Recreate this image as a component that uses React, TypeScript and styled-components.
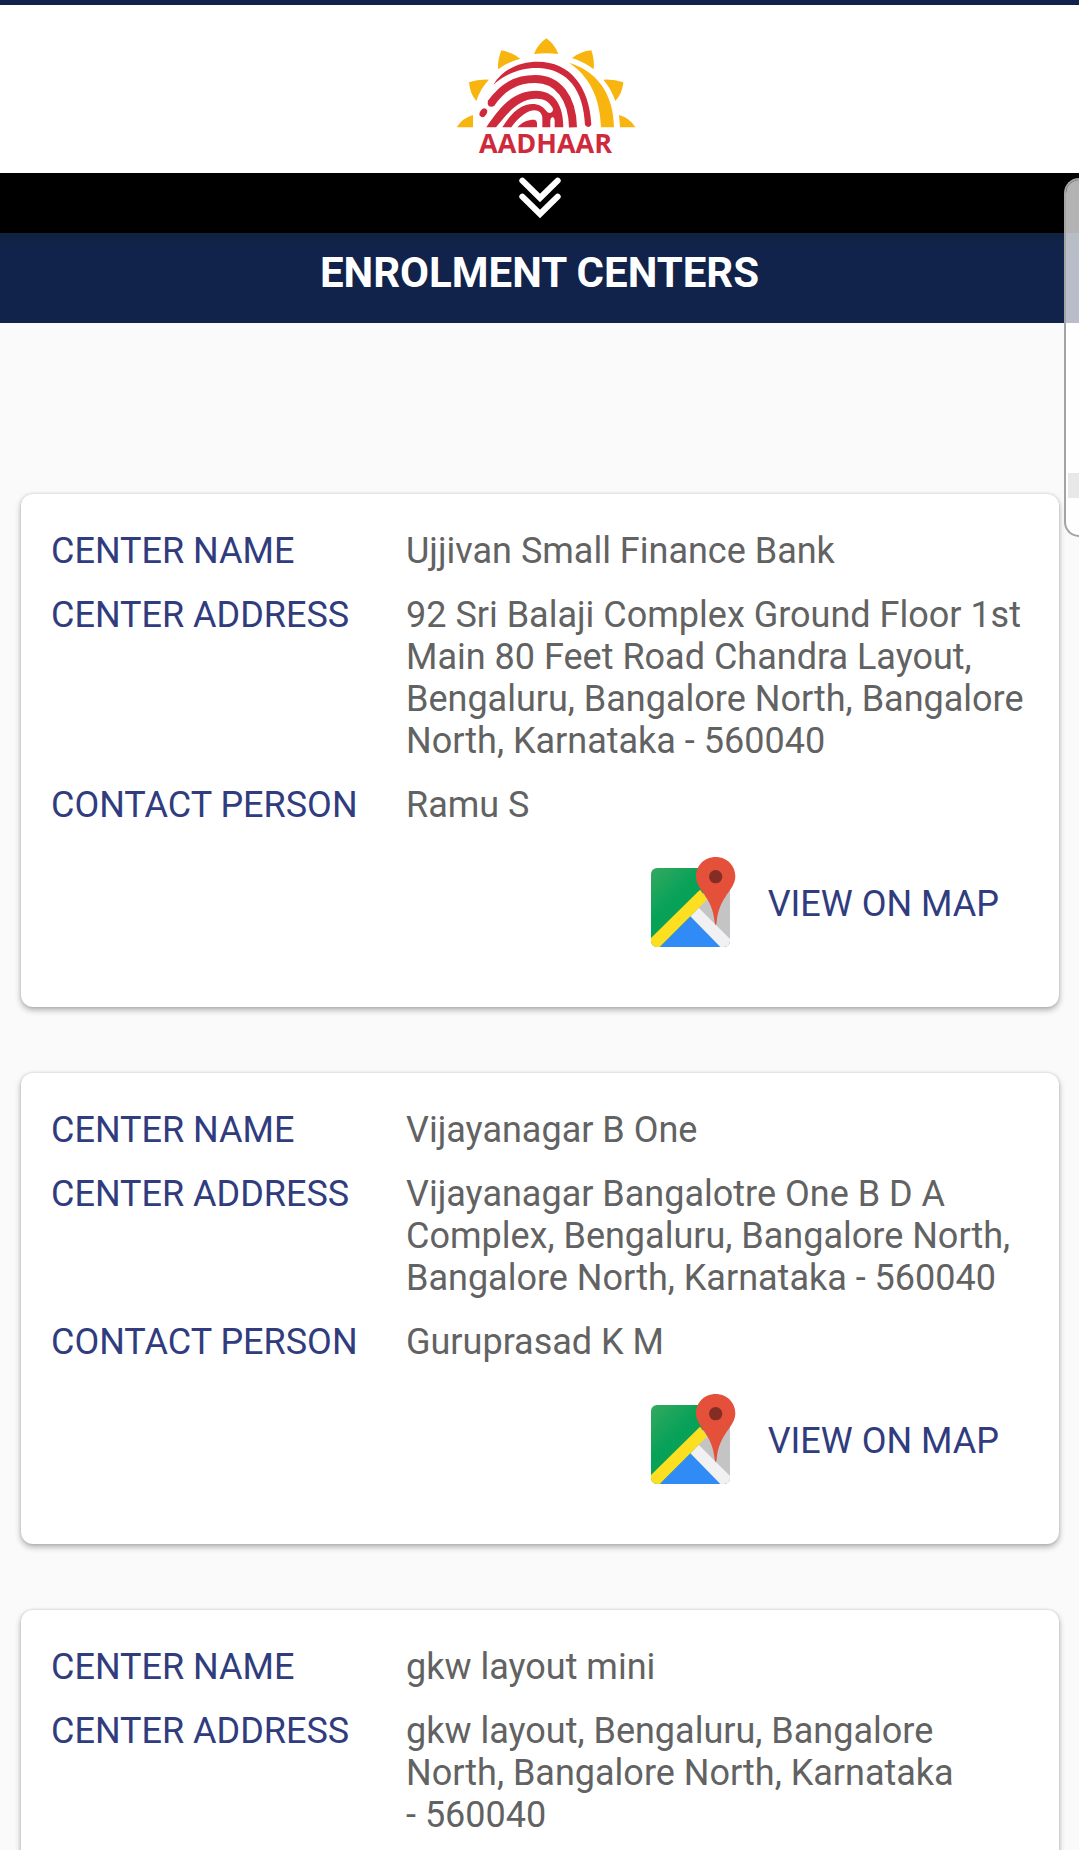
import React from "react";
import styled, { createGlobalStyle } from "styled-components";

const GlobalStyle = createGlobalStyle`
  *, *::before, *::after { box-sizing: border-box; }
  body {
    margin: 0;
    background: #fafafa;
    font-family: Roboto, "Noto Sans", sans-serif;
  }
`;

const Screen = styled.div`
  display: flex;
  flex-direction: column;
  height: 100vh;
  overflow: hidden;
  background: #fafafa;
`;

const Header = styled.header`
  flex: none;
  display: flex;
  flex-direction: column;
  align-items: center;
  height: 173px;
  padding: 32px 0 0 12px;
  border-top: 5px solid #11234a;
  background: #fff;
`;

const LogoName = styled.span`
  margin-top: -3px;
  color: #cf2a3c;
  font: 700 27px/36px "Open Sans", "Noto Sans", sans-serif;
`;

const Expander = styled.button`
  flex: none;
  display: flex;
  justify-content: center;
  align-items: flex-start;
  width: 100%;
  height: 60px;
  padding: 4px 0 0;
  border: 0;
  background: #000;
`;

const TitleBar = styled.div`
  flex: none;
  padding: 15px 16px 25px;
  background: linear-gradient(#10223f, #11234a 12px);
  text-align: center;
`;

const Title = styled.h1`
  margin: 0;
  color: #fff;
  font-size: 42px;
  font-weight: 700;
  line-height: 50px;
`;

const CenterList = styled.main`
  flex: 1;
  min-height: 0;
  display: flex;
  flex-direction: column;
  gap: 66px;
  padding: 171px 20px 66px 21px;
  overflow-y: auto;
  scrollbar-width: none;
`;

const Card = styled.article`
  flex: none;
  padding: 36px 24px 55px 30px;
  border-radius: 12px;
  background: #fff;
  box-shadow: 0 3px 6px rgba(0, 0, 0, 0.3), 0 0 3px rgba(0, 0, 0, 0.14);
`;

const Details = styled.dl`
  display: flex;
  flex-direction: column;
  gap: 22px;
  margin: 0;
`;

const Row = styled.div`
  display: grid;
  grid-template-columns: 355px 1fr;
  font-size: 36px;
  line-height: 42px;
`;

const Label = styled.dt`
  color: #303c7e;
`;

const Value = styled.dd`
  margin: 0;
  color: #626262;
`;

const Actions = styled.div`
  display: flex;
  justify-content: flex-end;
  padding: 30px 36px 0 0;
`;

const MapLink = styled.a`
  display: flex;
  align-items: center;
  gap: 32px;
  color: #303c7e;
  font-size: 36px;
  line-height: 42px;
  text-decoration: none;
`;

/* Pull-out tray that floats over the right edge of the screen. */
const EdgePanel = styled.aside`
  position: fixed;
  top: 178px;
  right: 0;
  width: 15px;
  height: 359px;
  padding: 293px 0 0 2px;
  border: 2px solid #a4a4a4;
  border-right: 0;
  border-radius: 20px 0 0 20px;
  background: rgba(255, 255, 255, 0.7);
  background-clip: padding-box;
`;

const EdgeItem = styled.div`
  height: 25px;
  background: #e8e8e8;
`;

function AadhaarMark() {
  return (
    <svg width="180" height="91" viewBox="48 50 540 273" aria-hidden="true">
      <g fill="#f9b50f">
        <path d="M50 321Q67 293 99 284V321Z" />
        <path d="M87 186Q116 176 147 178Q121 204 109 242Q90 221 87 186Z" />
        <path d="M184 90Q214 95 241 115Q206 124 174 147Q173 117 184 90Z" />
        <path d="M282 101Q293 72 319 54Q345 73 355 101Q319 97 282 101Z" />
        <path d="M396 113Q422 93 454 90Q464 119 461 147Q433 125 396 113Z" />
        <path d="M490 178Q522 176 550 186Q547 220 526 242Q513 204 490 178Z" />
        <path d="M537 284Q569 292 586 321H540Z" />
        <path d="M387 127C469 151 521 219 522 321H483C480 232 449 169 387 127Z" />
      </g>
      <g fill="#cf2a3c">
        <path d="M160 193C191 144 241 124 294 124C389 124 449 198 454 313Q446 326 435 314C431 211 384 147 297 143C242 141 197 161 160 193Z" />
        <ellipse cx="130" cy="277" rx="10" ry="14" transform="rotate(32 130 277)" />
        <path d="M139 321C186 250 226 211 288 211C342 212 370 251 370 321H344V300Q343 291 338 290Q332 291 331 300V321H307V292C306 274 290 264 268 273C243 285 227 302 214 321H187C206 290 228 264 258 254C284 246 306 254 319 272Q327 282 336 275Q342 268 336 260C326 242 310 234 288 235C240 236 208 270 168 321Z" />
        <path d="M232 321C247 303 267 297 284 298Q290 299 291 307V321Z" />
      </g>
      <path
        d="M153 249C189 199 228 176 286 176C354 176 397 232 399 321"
        fill="none"
        stroke="#cf2a3c"
        strokeWidth="24"
      />
      <circle cx="154" cy="248" r="11" fill="#cf2a3c" />
    </svg>
  );
}

function DoubleChevron() {
  return (
    <svg
      width="42"
      height="42"
      viewBox="0 0 126 126"
      fill="none"
      stroke="#fff"
      strokeWidth="18"
      strokeLinecap="round"
      aria-hidden="true"
    >
      <path d="M10 11L63 63L116 11" />
      <path d="M10 59L63 111L116 59" />
    </svg>
  );
}

function MapsIcon({ id }: { id: string }) {
  return (
    <svg width="86" height="96" viewBox="90 48 258 288" aria-hidden="true">
      <defs>
        <clipPath id={id}>
          <rect x="93" y="84" width="237" height="237" rx="18" />
        </clipPath>
        <linearGradient id={id + "-green"} x1="0" y1="0" x2="1" y2="1">
          <stop offset="0" stopColor="#35a960" />
          <stop offset="0.35" stopColor="#07a158" />
        </linearGradient>
      </defs>
      <g clipPath={`url(#${id})`}>
        <rect x="93" y="84" width="237" height="237" fill={`url(#${id}-green)`} />
        <path d="M330 84V330L226 195L250 160Z" fill="#c4c4c4" />
        <path d="M211 229L118 322H304Z" fill="#318bf7" />
        <path d="M211 229L236 203L332 299V324H304Z" fill="#f1f1f3" />
        <path d="M93 294L240 149L262 178L118 322H93Z" fill="#fbdf20" />
      </g>
      <path
        d="M287 51C254 51 228 76 228 109C228 151 278 170 284 247Q285 255 287 256Q289 255 290 247C296 170 346 151 346 109C346 76 320 51 287 51Z"
        fill="#e4503a"
      />
      <circle cx="287" cy="110" r="20" fill="#842d25" />
    </svg>
  );
}

type Center = {
  id: string;
  name: string;
  address: string;
  pin: string;
  contact?: string;
};

const centers: Center[] = [
  {
    id: "ujjivan",
    name: "Ujjivan Small Finance Bank",
    address:
      "92 Sri Balaji Complex Ground Floor 1st Main 80 Feet Road Chandra Layout, Bengaluru, Bangalore North, Bangalore North, Karnataka",
    pin: "560040",
    contact: "Ramu S",
  },
  {
    id: "vijayanagar",
    name: "Vijayanagar B One",
    address:
      "Vijayanagar Bangalotre One B D A Complex, Bengaluru, Bangalore North, Bangalore North, Karnataka",
    pin: "560040",
    contact: "Guruprasad K M",
  },
  {
    id: "gkw",
    name: "gkw layout mini",
    address: "gkw layout, Bengaluru, Bangalore North, Bangalore North, Karnataka",
    pin: "560040",
  },
];

/* The word joiner keeps the dash on the same line as the PIN code. */
function fullAddress({ address, pin }: Center) {
  return `${address} -\u2060\u00a0${pin}`;
}

function Field({ label, value }: { label: string; value: string }) {
  return (
    <Row>
      <Label>{label}</Label>
      <Value>{value}</Value>
    </Row>
  );
}

function CenterCard({ center }: { center: Center }) {
  return (
    <Card>
      <Details>
        <Field label="CENTER NAME" value={center.name} />
        <Field label="CENTER ADDRESS" value={fullAddress(center)} />
        {center.contact && <Field label="CONTACT PERSON" value={center.contact} />}
      </Details>
      {center.contact && (
        <Actions>
          <MapLink href={`#map-${center.id}`}>
            <MapsIcon id={`tile-${center.id}`} />
            VIEW ON MAP
          </MapLink>
        </Actions>
      )}
    </Card>
  );
}

export default function App() {
  return (
    <>
      <GlobalStyle />
      <Screen>
        <Header>
          <AadhaarMark />
          <LogoName>AADHAAR</LogoName>
        </Header>
        <Expander type="button" aria-label="Expand">
          <DoubleChevron />
        </Expander>
        <TitleBar>
          <Title>ENROLMENT CENTERS</Title>
        </TitleBar>
        <CenterList>
          {centers.map((center) => (
            <CenterCard key={center.id} center={center} />
          ))}
        </CenterList>
        <EdgePanel>
          <EdgeItem />
        </EdgePanel>
      </Screen>
    </>
  );
}
